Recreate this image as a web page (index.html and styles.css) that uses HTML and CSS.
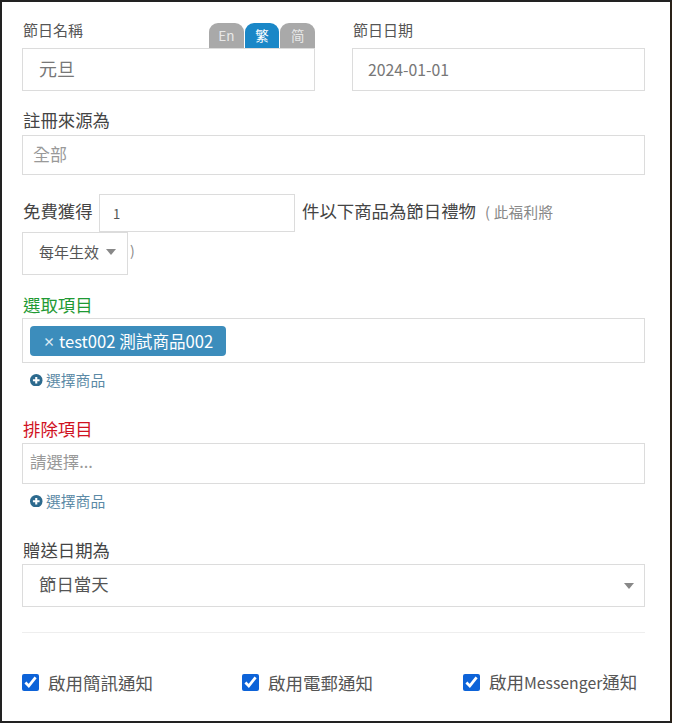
FILE: index.html
```html
<!DOCTYPE html>
<html lang="zh-Hant">
<head>
<meta charset="utf-8">
<title>節日禮物設定</title>
<link rel="stylesheet" href="styles.css">
</head>
<body>
<main class="frame">
  <section class="top-row">
    <div class="top-field">
      <div class="top-head">
        <span class="small-label">節日名稱</span>
        <div class="tabs">
          <span class="tab">En</span>
          <span class="tab tab-active">繁</span>
          <span class="tab">简</span>
        </div>
      </div>
      <div class="control control-name">元旦</div>
    </div>
    <div class="top-field">
      <div class="top-head">
        <span class="small-label">節日日期</span>
      </div>
      <div class="control control-date">2024-01-01</div>
    </div>
  </section>

  <div class="big-label label-source">註冊來源為</div>
  <div class="control control-source">全部</div>

  <section class="gift-row">
    <span class="gift-text gift-first">免費獲得</span>
    <div class="control control-qty">1</div>
    <span class="gift-text gift-after">件以下商品為節日禮物</span>
    <span class="gift-note">( 此福利將</span>
  </section>
  <section class="period-row">
    <div class="control control-period">每年生效<span class="caret"></span></div>
    <span class="paren">)</span>
  </section>

  <div class="big-label label-green">選取項目</div>
  <div class="control control-tags">
    <span class="tag"><span class="tag-x">×</span>test002 測試商品002</span>
  </div>
  <a class="pick pick-first">
    <svg class="pick-icon" viewBox="0 0 12 12" aria-hidden="true"><circle cx="6" cy="6" r="6" fill="#2c6a8e"/><path d="M6 2.8v6.4M2.8 6h6.4" stroke="#fff" stroke-width="2"/></svg>
    選擇商品
  </a>

  <div class="big-label label-red">排除項目</div>
  <div class="control control-exclude">請選擇...</div>
  <a class="pick pick-second">
    <svg class="pick-icon" viewBox="0 0 12 12" aria-hidden="true"><circle cx="6" cy="6" r="6" fill="#2c6a8e"/><path d="M6 2.8v6.4M2.8 6h6.4" stroke="#fff" stroke-width="2"/></svg>
    選擇商品
  </a>

  <div class="big-label label-date">贈送日期為</div>
  <div class="control control-when">節日當天<span class="caret caret-end"></span></div>

  <hr class="divider">

  <section class="checks">
    <label class="check"><input type="checkbox" checked>啟用簡訊通知</label>
    <label class="check"><input type="checkbox" checked>啟用電郵通知</label>
    <label class="check"><input type="checkbox" checked><span>啟用<span class="latin">Messenger</span>通知</span></label>
  </section>
</main>
</body>
</html>
```
FILE: styles.css
```css
* { box-sizing: border-box; }
html, body { margin: 0; padding: 0; background: #fff; }
body {
  font-family: "Noto Sans CJK TC", "Noto Sans", sans-serif;
  color: #555;
  width: 674px;
  height: 723px;
  overflow: hidden;
}
.frame {
  width: 672px;
  height: 723px;
  border: 2px solid #222;
  border-right-color: #2a2118;
  padding: 20px 25px 0 20px;
  overflow: hidden;
}
.top-row { display: grid; grid-template-columns: 293px 293px; column-gap: 37px; }
.top-head { display: flex; justify-content: space-between; align-items: flex-start; height: 26px; }
.small-label { font-size: 15px; line-height: 18px; color: #555; margin: -1px 0 0 1px; }
.tabs { display: flex; gap: 1px; margin-top: 1px; }
.tab {
  width: 34.7px;
  height: 25px;
  background: #a9a9a9;
  color: #e8e8e8;
  border-radius: 9px 9px 0 0;
  font-size: 13.5px;
  line-height: 24px;
  text-align: center;
}
.tab-active { background: #1a87c7; color: #fff; }
.control {
  border: 1px solid #dcdcdc;
  background: #fff;
  color: #777;
}
.control-name { height: 43px; padding-left: 16px; font-size: 18px; line-height: 39px; color: #777; }
.control-date { height: 43px; padding-left: 15px; font-size: 15.8px; line-height: 42px; }
.big-label { font-size: 17.4px; line-height: 22px; color: #444; margin-left: 1px; }
.label-source { margin-top: 18px; height: 26px; }
.control-source { height: 40px; padding-left: 10px; font-size: 17px; line-height: 35px; color: #999; }
.gift-row { display: flex; align-items: center; height: 38px; margin-top: 19px; }
.gift-text { font-size: 17.4px; color: #444; white-space: nowrap; margin-bottom: 6px; }
.gift-first { margin-left: 1px; width: 76px; }
.control-qty { width: 196px; height: 38px; padding-left: 13px; font-size: 13px; line-height: 37px; color: #555; }
.gift-after { margin-left: 7px; }
.gift-note { font-size: 14.6px; letter-spacing: 0.3px; color: #888; margin: 0 0 4px 9px; white-space: nowrap; }
.period-row { display: flex; height: 43px; }
.control-period {
  width: 106px;
  height: 43px;
  padding: 0 0 4px 16px;
  font-size: 15px;
  color: #555;
  display: flex;
  align-items: center;
}
.caret {
  width: 0;
  height: 0;
  border-left: 5.5px solid transparent;
  border-right: 5.5px solid transparent;
  border-top: 6px solid #888;
  margin-left: 7px;
}
.paren { font-size: 14px; line-height: 37px; color: #888; margin-left: 2px; }
.label-green { color: #1f9a34; margin-top: 19px; height: 24px; }
.control-tags { height: 45px; padding: 7px 7px 0; }
.tag {
  display: inline-flex;
  align-items: center;
  width: 196px;
  height: 30px;
  background: #3c8dbc;
  color: #fff;
  border-radius: 4px;
  padding-left: 13px;
  font-size: 16.6px;
  white-space: nowrap;
}
.tag-x { font-size: 12px; font-weight: 700; margin-right: 4px; color: #dcebf4; }
.pick {
  display: flex;
  align-items: center;
  gap: 3.5px;
  margin-left: 8px;
  font-size: 14.8px;
  line-height: 18px;
  color: #5b8aa6;
}
.pick-icon { width: 12.5px; height: 12.5px; flex: none; }
.pick-first { margin-top: 8px; }
.pick-second { margin-top: 8px; }
.label-red { color: #d0121f; margin-top: 29px; height: 24px; }
.control-exclude { height: 41px; padding-left: 7px; font-size: 16.4px; line-height: 35px; color: #999; margin-top: 1px; }
.label-date { margin-top: 29px; height: 24px; }
.control-when {
  height: 43px;
  padding: 0 10px 5px 16px;
  font-size: 17.4px;
  color: #555;
  margin-top: 1px;
  display: flex;
  justify-content: space-between;
  align-items: center;
}
.caret-end { margin-top: 6px; }
.divider { border: 0; border-top: 1px solid #eee; margin: 25px 0 0; }
.checks {
  display: grid;
  grid-template-columns: 220px 221px 1fr;
  margin-top: 35px;
}
.check {
  display: flex;
  align-items: center;
  font-size: 17.5px;
  line-height: 28px;
  color: #555;
  white-space: nowrap;
}
.latin { font-size: 15.8px; }
.check input {
  width: 17px;
  height: 17px;
  margin: 0 9px 0 0;
  accent-color: #0d63d8;
}
```
